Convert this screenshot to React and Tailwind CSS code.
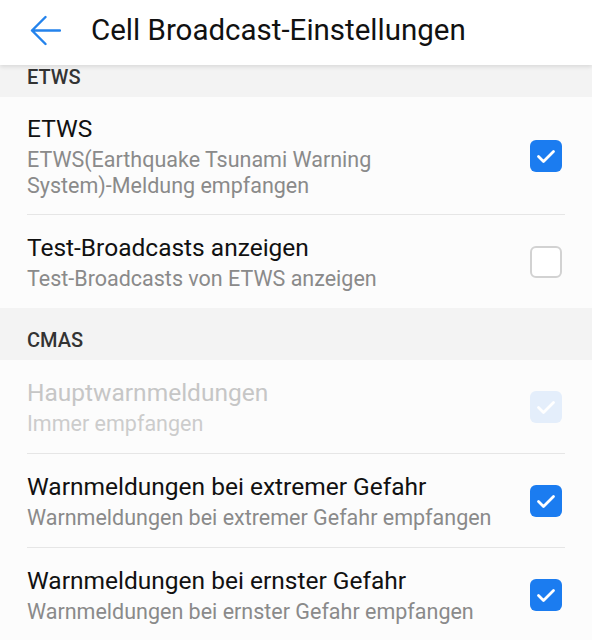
import React from 'react';

const items = [
  {
    section: 'ETWS',
    clipped: true,
    rows: [
      { title: 'ETWS', sub: ['ETWS(Earthquake Tsunami Warning', 'System)-Meldung empfangen'], checked: true },
      { title: 'Test-Broadcasts anzeigen', sub: ['Test-Broadcasts von ETWS anzeigen'], checked: false },
    ],
  },
  {
    section: 'CMAS',
    rows: [
      { title: 'Hauptwarnmeldungen', sub: ['Immer empfangen'], checked: true, disabled: true },
      { title: 'Warnmeldungen bei extremer Gefahr', sub: ['Warnmeldungen bei extremer Gefahr empfangen'], checked: true },
      { title: 'Warnmeldungen bei ernster Gefahr', sub: ['Warnmeldungen bei ernster Gefahr empfangen'], checked: true },
    ],
  },
];

const Check = ({ checked, disabled }) => {
  if (!checked) {
    return <div className="w-[32px] h-[32px] rounded-[6px] border-2 border-[#d2d2d2] bg-white shrink-0"></div>;
  }
  return (
    <div className={`w-[32px] h-[32px] rounded-[6px] shrink-0 ${disabled ? 'bg-[#e4eefb]' : 'bg-[#1b7cf0]'}`}>
      <svg width="32" height="32" viewBox="0 0 32 32" fill="none">
        <path d="M8.5 16.5 L13.5 21.5 L23.5 11.5" stroke="white" strokeWidth="2.8" strokeLinecap="round" strokeLinejoin="round" />
      </svg>
    </div>
  );
};

const Row = ({ row, last }) => (
  <div className="px-[27px]">
    <div className={`flex items-center justify-between pr-[3px] pt-[16px] ${last ? '' : 'border-b border-[#e6e6e6]'} ${row.sub.length > 1 ? 'pb-[15px]' : 'pb-[16px]'}`}>
      <div className={row.sub.length > 1 ? '' : 'pt-[1px]'}>
        <div className={`text-[24.5px] leading-[32px] ${row.disabled ? 'text-[#c6c6c6]' : 'text-[#111]'}`}>{row.title}</div>
        <div className="mt-[2px]">
          {row.sub.map((s) => (
            <div key={s} className={`text-[21.5px] leading-[26px] ${row.disabled ? 'text-[#cccccc]' : 'text-[#8a8a8a]'}`}>{s}</div>
          ))}
        </div>
      </div>
      <Check checked={row.checked} disabled={row.disabled} />
    </div>
  </div>
);

export default function App() {
  return (
    <div className="w-[592px] h-[640px] overflow-hidden bg-[#fcfcfc] flex flex-col" style={{ fontFamily: 'Roboto, "Noto Sans", sans-serif' }}>
      <div className="h-[65px] bg-white flex items-center shrink-0 relative z-10 shadow-[0_2px_4px_rgba(0,0,0,0.10)]">
        <div className="w-[91px] pl-[30px] pb-[4px]">
          <svg width="31" height="31" viewBox="0 0 31 31" fill="none">
            <path d="M30 15.5 H2 M15.5 2 L2 15.5 L15.5 29" stroke="#2483ec" strokeWidth="2.4" strokeLinecap="round" strokeLinejoin="round" />
          </svg>
        </div>
        <div className="text-[29.5px] leading-[36px] text-[#111] pb-[6px]">Cell Broadcast-Einstellungen</div>
      </div>
      {items.map((sec) => (
        <div key={sec.section}>
          <div className={`bg-[#f3f3f3] px-[27px] text-[20px] leading-[24px] font-medium text-[#333] ${sec.clipped ? 'h-[32px]' : 'h-[52px] pt-[20px]'}`}>
            {sec.section}
          </div>
          {sec.rows.map((r, i) => (
            <Row key={r.title} row={r} last={i === sec.rows.length - 1} />
          ))}
        </div>
      ))}
    </div>
  );
}
